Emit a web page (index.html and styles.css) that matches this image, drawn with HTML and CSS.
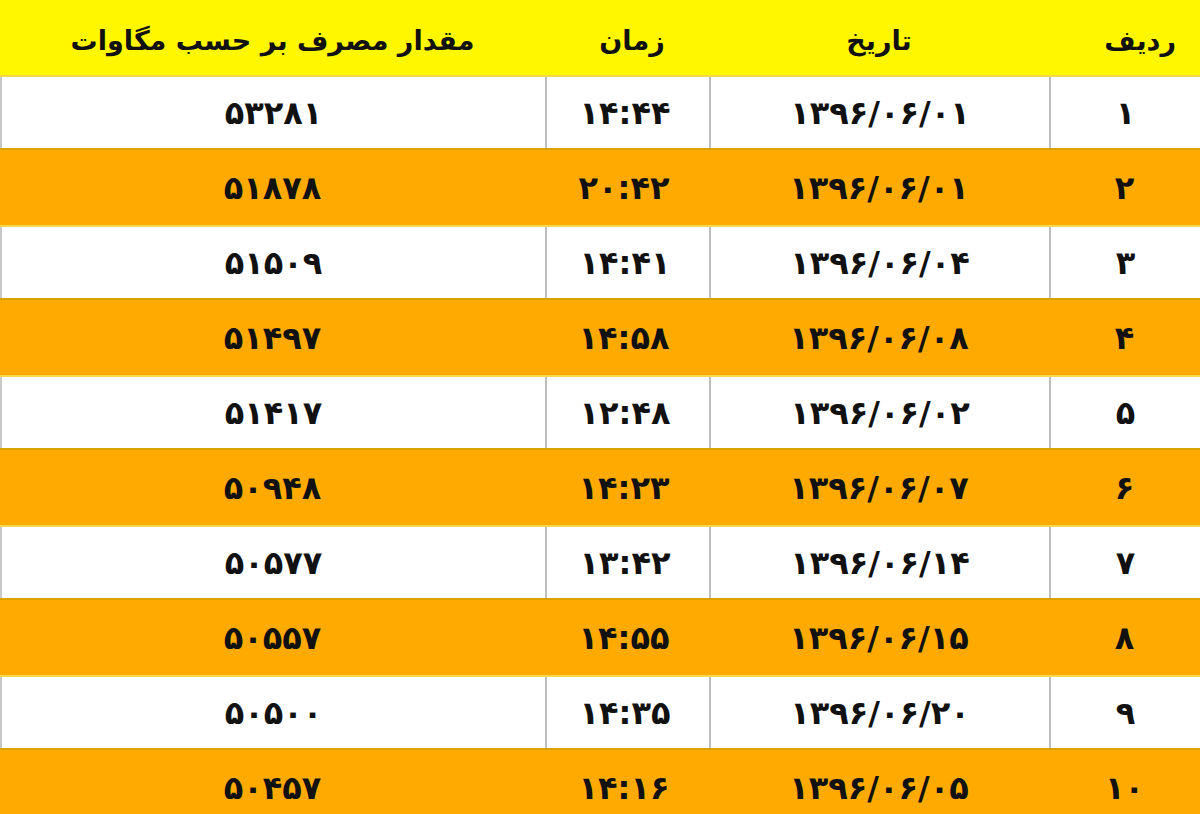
FILE: index.html
```html
<!DOCTYPE html>
<html lang="fa" dir="rtl">
<head>
<meta charset="utf-8">
<title>جدول مصرف برق</title>
<link rel="stylesheet" href="styles.css">
</head>
<body>
<div class="table">
  <div class="row head">
    <div class="cell c-idx">ردیف</div>
    <div class="cell c-date">تاریخ</div>
    <div class="cell c-time">زمان</div>
    <div class="cell c-val">مقدار مصرف بر حسب مگاوات</div>
  </div>
  <div class="row white">
    <div class="cell c-idx">۱</div><div class="cell c-date">۱۳۹۶/۰۶/۰۱</div><div class="cell c-time">۱۴:۴۴</div><div class="cell c-val">۵۳۲۸۱</div>
  </div>
  <div class="row orange">
    <div class="cell c-idx">۲</div><div class="cell c-date">۱۳۹۶/۰۶/۰۱</div><div class="cell c-time">۲۰:۴۲</div><div class="cell c-val">۵۱۸۷۸</div>
  </div>
  <div class="row white">
    <div class="cell c-idx">۳</div><div class="cell c-date">۱۳۹۶/۰۶/۰۴</div><div class="cell c-time">۱۴:۴۱</div><div class="cell c-val">۵۱۵۰۹</div>
  </div>
  <div class="row orange">
    <div class="cell c-idx">۴</div><div class="cell c-date">۱۳۹۶/۰۶/۰۸</div><div class="cell c-time">۱۴:۵۸</div><div class="cell c-val">۵۱۴۹۷</div>
  </div>
  <div class="row white">
    <div class="cell c-idx">۵</div><div class="cell c-date">۱۳۹۶/۰۶/۰۲</div><div class="cell c-time">۱۲:۴۸</div><div class="cell c-val">۵۱۴۱۷</div>
  </div>
  <div class="row orange">
    <div class="cell c-idx">۶</div><div class="cell c-date">۱۳۹۶/۰۶/۰۷</div><div class="cell c-time">۱۴:۲۳</div><div class="cell c-val">۵۰۹۴۸</div>
  </div>
  <div class="row white">
    <div class="cell c-idx">۷</div><div class="cell c-date">۱۳۹۶/۰۶/۱۴</div><div class="cell c-time">۱۳:۴۲</div><div class="cell c-val">۵۰۵۷۷</div>
  </div>
  <div class="row orange">
    <div class="cell c-idx">۸</div><div class="cell c-date">۱۳۹۶/۰۶/۱۵</div><div class="cell c-time">۱۴:۵۵</div><div class="cell c-val">۵۰۵۵۷</div>
  </div>
  <div class="row white">
    <div class="cell c-idx">۹</div><div class="cell c-date">۱۳۹۶/۰۶/۲۰</div><div class="cell c-time">۱۴:۳۵</div><div class="cell c-val">۵۰۵۰۰</div>
  </div>
  <div class="row orange">
    <div class="cell c-idx">۱۰</div><div class="cell c-date">۱۳۹۶/۰۶/۰۵</div><div class="cell c-time">۱۴:۱۶</div><div class="cell c-val">۵۰۴۵۷</div>
  </div>
</div>
</body>
</html>
```
FILE: styles.css
```css
html, body {
  margin: 0;
  padding: 0;
  background: #ffffff;
  overflow: hidden;
}

body {
  width: 1200px;
  height: 814px;
  font-family: "DejaVu Sans", "Noto Sans", sans-serif;
  color: #111111;
}

.table {
  display: flex;
  flex-direction: column;
  direction: rtl;
}

.row {
  display: grid;
  grid-template-columns: 151px 340px 164px 545px;
  height: 75px;
  box-sizing: border-box;
}

.cell {
  display: flex;
  align-items: center;
  justify-content: center;
  font-size: 32px;
  font-weight: bold;
  letter-spacing: 1px;
  box-sizing: border-box;
}

.head {
  background: #fff700;
  height: 75px;
}

.head .cell {
  font-size: 27px;
  letter-spacing: 0;
  padding-top: 6px;
}

.head .c-idx {
  justify-content: flex-start;
  padding-right: 24px;
}

.head .c-time {
  padding-right: 0;
  padding-left: 10px;
}

.white {
  background: #ffffff;
  border-top: 2px solid #f2d84a;
  border-bottom: 2px solid #d9a400;
}

.white .cell {
  border-left: 2px solid #bdbdbd;
}

.white .c-val {
  border-left: 2px solid #c8c8c8;
}

.orange {
  background: #ffaa00;
}

.c-val {
  letter-spacing: 3px;
}

.c-time {
  letter-spacing: 0;
  padding-right: 6px;
}
```
